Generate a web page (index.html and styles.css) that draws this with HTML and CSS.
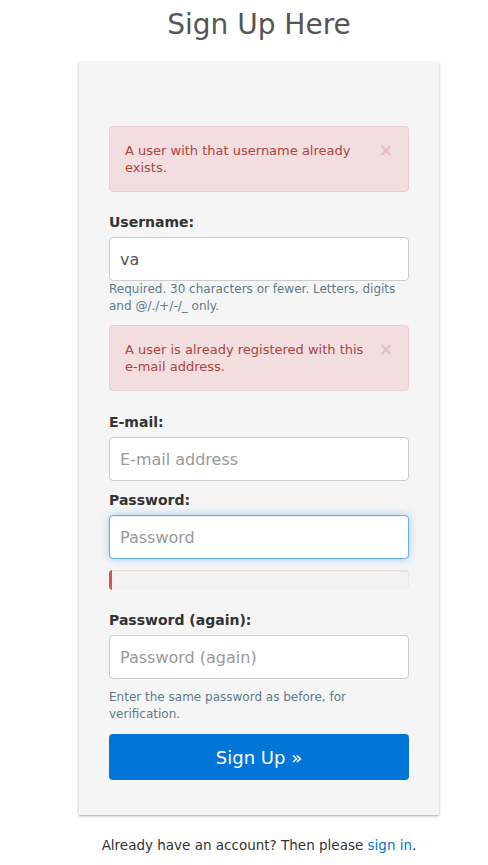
FILE: index.html
```html
<!DOCTYPE html>
<html lang="en">
<head>
<meta charset="utf-8">
<title>Sign Up</title>
<link rel="stylesheet" href="styles.css">
</head>
<body>
<div class="page">
  <h1 class="title">Sign Up Here</h1>
  <form class="card">
    <div class="alert">
      <span class="alert-text">A user with that username already exists.</span>
      <span class="close">×</span>
    </div>
    <label class="label" for="u">Username:</label>
    <input class="input" id="u" type="text" value="va">
    <p class="help help-tight">Required. 30 characters or fewer. Letters, digits and @/./+/-/_ only.</p>
    <div class="alert alert-second">
      <span class="alert-text">A user is already registered with this e-mail address.</span>
      <span class="close">×</span>
    </div>
    <label class="label" for="e">E-mail:</label>
    <input class="input" id="e" type="email" placeholder="E-mail address">
    <label class="label label-gap" for="p">Password:</label>
    <input class="input input-focus" id="p" type="password" placeholder="Password">
    <div class="progress"><div class="progress-bar" style="width:1%"></div></div>
    <label class="label" for="p2">Password (again):</label>
    <input class="input" id="p2" type="password" placeholder="Password (again)">
    <p class="help help-spaced">Enter the same password as before, for verification.</p>
    <button class="btn" type="button">Sign Up »</button>
  </form>
  <p class="footer">Already have an account? Then please <a class="link" href="#">sign in</a>.</p>
</div>
</body>
</html>
```
FILE: styles.css
```css
* { box-sizing: border-box; }
html, body { margin: 0; padding: 0; background: #fff; }
body {
  font-family: "DejaVu Sans", "Noto Sans", sans-serif;
  color: #333;
}
.page {
  padding-left: 30px;
  display: flex;
  flex-direction: column;
  align-items: center;
}
.title {
  margin: 0 0 12px;
  height: 50px;
  line-height: 50px;
  font-size: 28px;
  font-weight: 400;
  color: #555;
}
.card {
  width: 360px;
  background: #f5f5f5;
  box-shadow: 0 1px 3px rgba(0,0,0,0.25), 0 1px 1px rgba(0,0,0,0.1);
  padding: 64px 30px 35px;
  display: flex;
  flex-direction: column;
}
.alert {
  display: flex;
  align-items: flex-start;
  background: #f2dede;
  border: 1px solid #ebccd1;
  border-radius: 4px;
  color: #a94442;
  padding: 15px;
  font-size: 13px;
  line-height: 17px;
  margin-bottom: 20px;
  min-height: 65px;
}
.alert-second { margin-top: 10px; margin-bottom: 21px; }
.alert-text { flex: 1; padding-right: 6px; }
.close {
  font-size: 17px;
  font-weight: 700;
  line-height: 17px;
  color: #a94442;
  opacity: 0.2;
  margin-right: 0;
}
.label {
  font-size: 14px;
  font-weight: 700;
  line-height: 20px;
  margin-bottom: 5px;
  color: #333;
}
.label-gap { margin-top: 9px; }
.input {
  height: 44px;
  width: 100%;
  border: 1px solid #ccc;
  border-radius: 4px;
  background: #fff;
  padding: 0 10px;
  font-family: inherit;
  font-size: 16px;
  color: #555;
  outline: none;
}
.input::placeholder { color: #999; }
.input-focus {
  border-color: #66afe9;
  box-shadow: inset 0 1px 1px rgba(0,0,0,.075), 0 0 8px rgba(102,175,233,.6);
}
.help {
  margin: 0;
  font-size: 12px;
  line-height: 17px;
  color: #5e7a8b;
}
.help-spaced { margin-top: 10px; }
.progress {
  margin-top: 11px;
  margin-bottom: 20px;
  height: 20px;
  background: #f2f2f2;
  border-radius: 4px;
  box-shadow: inset 0 1px 2px rgba(0,0,0,.1);
  overflow: hidden;
}
.progress-bar {
  height: 100%;
  background: #d9534f;
  min-width: 3px;
}
.btn {
  margin-top: 11px;
  height: 46px;
  border: none;
  border-radius: 4px;
  background: #0275d8;
  color: #fff;
  font-family: inherit;
  font-size: 18px;
}
.footer {
  margin: 20px 0 0;
  line-height: 20px;
  font-size: 13.5px;
  color: #333;
}
.link { color: #0275d8; text-decoration: none; }
```
